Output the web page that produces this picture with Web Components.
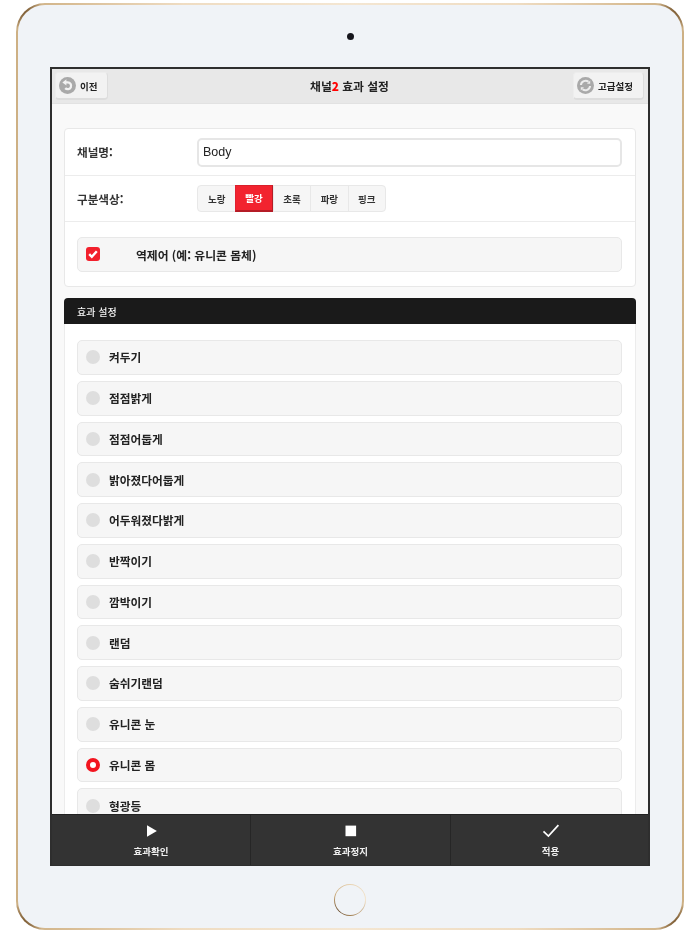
<!DOCTYPE html>
<html lang="ko"><head><meta charset="utf-8"><title>채널2 효과 설정</title>
<style>
html,body{margin:0;padding:0;background:#fff;width:700px;height:934px;overflow:hidden}
body{font-family:"Noto Sans CJK KR","Liberation Sans",sans-serif}
</style></head><body>
<tablet-frame>
  <app-header slot="screen">
    <icon-button slot="left" icon="back" label="이전"></icon-button>
    <span>채널<b>2</b> 효과 설정</span>
    <icon-button slot="right" icon="sync" label="고급설정"></icon-button>
  </app-header>
  <settings-page slot="screen">
    <channel-card></channel-card>
    <effect-panel title="효과 설정">
      <radio-row label="켜두기"></radio-row>
      <radio-row label="점점밝게"></radio-row>
      <radio-row label="점점어둡게"></radio-row>
      <radio-row label="밝아졌다어둡게"></radio-row>
      <radio-row label="어두워졌다밝게"></radio-row>
      <radio-row label="반짝이기"></radio-row>
      <radio-row label="깜박이기"></radio-row>
      <radio-row label="랜덤"></radio-row>
      <radio-row label="숨쉬기랜덤"></radio-row>
      <radio-row label="유니콘 눈"></radio-row>
      <radio-row label="유니콘 몸" checked></radio-row>
      <radio-row label="형광등"></radio-row>
    </effect-panel>
  </settings-page>
  <tab-bar slot="screen">
    <tab-item icon="play" label="효과확인"></tab-item>
    <tab-item icon="stop" label="효과정지"></tab-item>
    <tab-item icon="check" label="적용"></tab-item>
  </tab-bar>
</tablet-frame>
<script>
const def=(name,html,init)=>customElements.define(name,class extends HTMLElement{
  constructor(){super();this.attachShadow({mode:'open'}).innerHTML=typeof html==='function'?html(this):html;}
  connectedCallback(){
    const a=n=>this.getAttribute(n)||'';
    this.shadowRoot.querySelectorAll('[data-text]').forEach(e=>e.textContent=a(e.dataset.text));
    if(init)init(this,a);
  }
});
const ICONS={
 back:'<svg width="21" height="21" viewBox="0 0 21 21"><circle cx="10.5" cy="10.5" r="8.5" fill="#a9a9a9"/><path d="M8.6 7.4h2.1a3.4 3.4 0 1 1-2.5 5.7" fill="none" stroke="#f2f2f2" stroke-width="2.3"/><path d="M9.4 4.3v6.2L5.4 7.4z" fill="#f2f2f2"/></svg>',
 sync:'<svg width="21" height="21" viewBox="0 0 21 21"><circle cx="10.5" cy="10.5" r="8.5" fill="#a9a9a9"/><path d="M5.9 10a4.7 4.7 0 0 1 7.6-3.2M15.1 11a4.7 4.7 0 0 1-7.6 3.2" fill="none" stroke="#ececec" stroke-width="2.1"/><path d="M15.2 5.6v3.2h-3.2zM5.8 15.4v-3.2h3.2z" fill="#ececec"/></svg>',
 play:'<svg width="14" height="16" viewBox="0 0 14 16"><path d="M3 2.2 12.9 8 3 13.8z" fill="#fff"/></svg>',
 stop:'<svg width="14" height="16" viewBox="0 0 14 16"><rect x="1.5" y="2.6" width="10.6" height="10.6" fill="#fff"/></svg>',
 check:'<svg width="18" height="16" viewBox="0 0 18 16"><path d="M1.5 8.4 6.4 13 16.4 2.2" fill="none" stroke="#fff" stroke-width="1.7"/></svg>'
};
def('tablet-frame',`<style>
:host{display:block;width:668px;height:927px;margin:3px 0 0 16px;box-sizing:border-box;border-radius:29px;padding:2px;
 background:
  radial-gradient(circle 26px at 0 0,#7d5c34 45%,transparent 100%),
  radial-gradient(circle 26px at 100% 0,#7d5c34 45%,transparent 100%),
  radial-gradient(circle 26px at 0 100%,#7d5c34 45%,transparent 100%),
  radial-gradient(circle 26px at 100% 100%,#7d5c34 45%,transparent 100%),
  linear-gradient(90deg,#cdb084 0,#d8bc94 8%,#efdcc2 25%,#f4e6d2 50%,#efdcc2 75%,#d8bc94 92%,#cdb084 100%)}
.body{height:100%;box-sizing:border-box;background:#f0f3f7;border-radius:27px;display:flex;flex-direction:column;align-items:center;padding-top:28px}
.cam{width:7px;height:7px;border-radius:50%;background:#15151c}
.screen{width:600px;height:799px;margin-top:27px;box-sizing:border-box;border:2px solid #2e2e2e;border-bottom-width:1px;background:#f9f9f9;display:flex;flex-direction:column;overflow:hidden;filter:blur(.35px)}
.home{width:32px;height:32px;margin-top:18px;box-sizing:border-box;border-radius:50%;padding:1.2px;background:conic-gradient(#e8d3b2,#f3e3cc 25%,#a07e52 50%,#6e5233 62%,#caa97a 80%,#e8d3b2)}
.home i{display:block;height:100%;border-radius:50%;background:#f0f3f7}
</style><div class="body"><div class="cam"></div><div class="screen"><slot name="screen"></slot></div><div class="home"><i></i></div></div>`);
def('app-header',`<style>
:host{display:grid;grid-template-columns:1fr auto 1fr;align-items:center;flex:none;height:34px;background:#e8e8e8;border-bottom:1px solid #e2e2e2;padding:0 4px 0 3px;font:700 11.8px "Noto Sans CJK KR",sans-serif;color:#222}
::slotted([slot=left]){justify-self:start}
::slotted([slot=right]){justify-self:end}
::slotted(span){margin-top:-1px}
</style><slot name="left"></slot><slot></slot><slot name="right"></slot>`);
document.querySelector('app-header span b').style.color='#f00';
def('icon-button',h=>`<style>
:host{display:inline-flex;align-items:center;gap:2px;height:28px;box-sizing:border-box;padding:0 10px 0 1px;background:#f2f2f2;border:1px solid #ededed;border-bottom:2px solid #ddd;border-right-color:#ddd;border-radius:4px;font:700 9.5px "Noto Sans CJK KR",sans-serif;color:#222}
svg{display:block}
</style>${ICONS[h.getAttribute('icon')]}<span data-text="label"></span>`);
def('settings-page',`<style>
:host{display:block;flex:1;min-height:0;overflow:hidden;padding:24px 12px 0;box-sizing:border-box;background:#f9f9f9}
</style><slot></slot>`);
def('channel-card',`<style>
:host{display:block;width:572px;box-sizing:border-box;background:#fff;border:1px solid #e8e8e8;border-radius:4px;font:700 11.6px "Noto Sans CJK KR",sans-serif;color:#333}
.row{display:flex;align-items:center;padding:0 13px 0 12px;border-bottom:1px solid #ececec;box-sizing:border-box}
.row:last-child{border:0}
.lab{width:120px;flex:none}
.r1{height:47px}.r1 .lab{margin-top:-1px}
.r2{height:46px}.r3{height:64px;padding-top:1px}
.inp{flex:1;height:29px;box-sizing:border-box;border:2px solid #e6e6e6;border-radius:5px;background:#fff;font:500 12.5px "Liberation Sans",sans-serif;color:#222;padding:0 0 1px 4px;display:flex;align-items:center}
.seg{display:flex;height:27px;box-sizing:border-box;border:1px solid #e8e8e8;border-radius:4px;background:#f6f6f6;font:700 9.5px "Noto Sans CJK KR",sans-serif}
.seg span{width:37.4px;display:flex;align-items:center;justify-content:center;border-left:1px solid #e8e8e8;box-sizing:border-box;color:#333}
.seg span:first-child{border:0}
.seg .on{background:#f2232f;color:#fff;border:1px solid #b51c26;border-bottom-width:2px;border-top-color:#d8202b;border-left-color:#e02030;margin:-1px 0}
.chk{flex:1;height:34.5px;box-sizing:border-box;background:#f6f6f6;border:1px solid #e8e8e8;border-radius:5px;display:flex;align-items:center;padding:0 0 1px 8px;font:700 11.8px "Noto Sans CJK KR",sans-serif;color:#222}
.box{width:14px;height:14px;background:#f2202c;border-radius:3px;display:flex;align-items:center;justify-content:center;margin-right:36px}
</style>
<div class="row r1"><span class="lab">채널명:</span><div class="inp">Body</div></div>
<div class="row r2"><span class="lab">구분색상:</span><div class="seg"><span>노랑</span><span class="on">빨강</span><span>초록</span><span>파랑</span><span>핑크</span></div></div>
<div class="row r3"><div class="chk"><span class="box"><svg width="12" height="12" viewBox="0 0 12 12"><path d="M2.2 6.2 4.8 8.8 9.8 3.2" fill="none" stroke="#fff" stroke-width="2.4"/></svg></span>역제어 (예: 유니콘 몸체)</div></div>`);
def('effect-panel',`<style>
:host{display:block;width:572px;margin-top:11px;box-sizing:border-box;font:700 12px "Noto Sans CJK KR",sans-serif}
.h{height:26px;box-sizing:border-box;background:#1a1a1a;color:#f4f4f4;border-radius:4px 4px 0 0;display:flex;align-items:center;padding-left:13px;font-size:10px;font-weight:500}
.b{background:#fff;border:solid #ececec;border-width:0 1px;padding:16px 13px 0 12px;display:flex;flex-direction:column;gap:6px}
</style><div class="h" data-text="title"></div><div class="b"><slot></slot></div>`);
def('radio-row',`<style>
:host{display:flex;align-items:center;height:34.75px;box-sizing:border-box;background:#f6f6f6;border:1px solid #e8e8e8;border-radius:5px;padding-left:8px;font:700 11.7px/14px "Noto Sans CJK KR",sans-serif;color:#222;gap:9px}
i{width:14px;height:14px;border-radius:50%;background:#dedede;box-sizing:border-box;flex:none}
:host([checked]) i{background:#fff;border:4px solid #f2141f}
</style><i></i><span data-text="label"></span>`);
def('tab-bar',`<style>
:host{display:grid;grid-template-columns:198px 200px 198px;flex:none;height:51px;box-sizing:border-box;background:#333;border-top:1px solid #222}
</style><slot></slot>`);
def('tab-item',h=>`<style>
:host{display:flex;flex-direction:column;align-items:center;justify-content:flex-start;padding-top:8px;box-sizing:border-box;font:700 9.5px "Noto Sans CJK KR",sans-serif;color:#f0f0f0;border-left:1px solid #262626}
:host(:first-child){border-left:0}
:host(:last-child){padding-left:2px}
svg{display:block}
span{margin-top:5px;line-height:14px}
</style>${ICONS[h.getAttribute('icon')]}<span data-text="label"></span>`);
</script>
</body></html>
